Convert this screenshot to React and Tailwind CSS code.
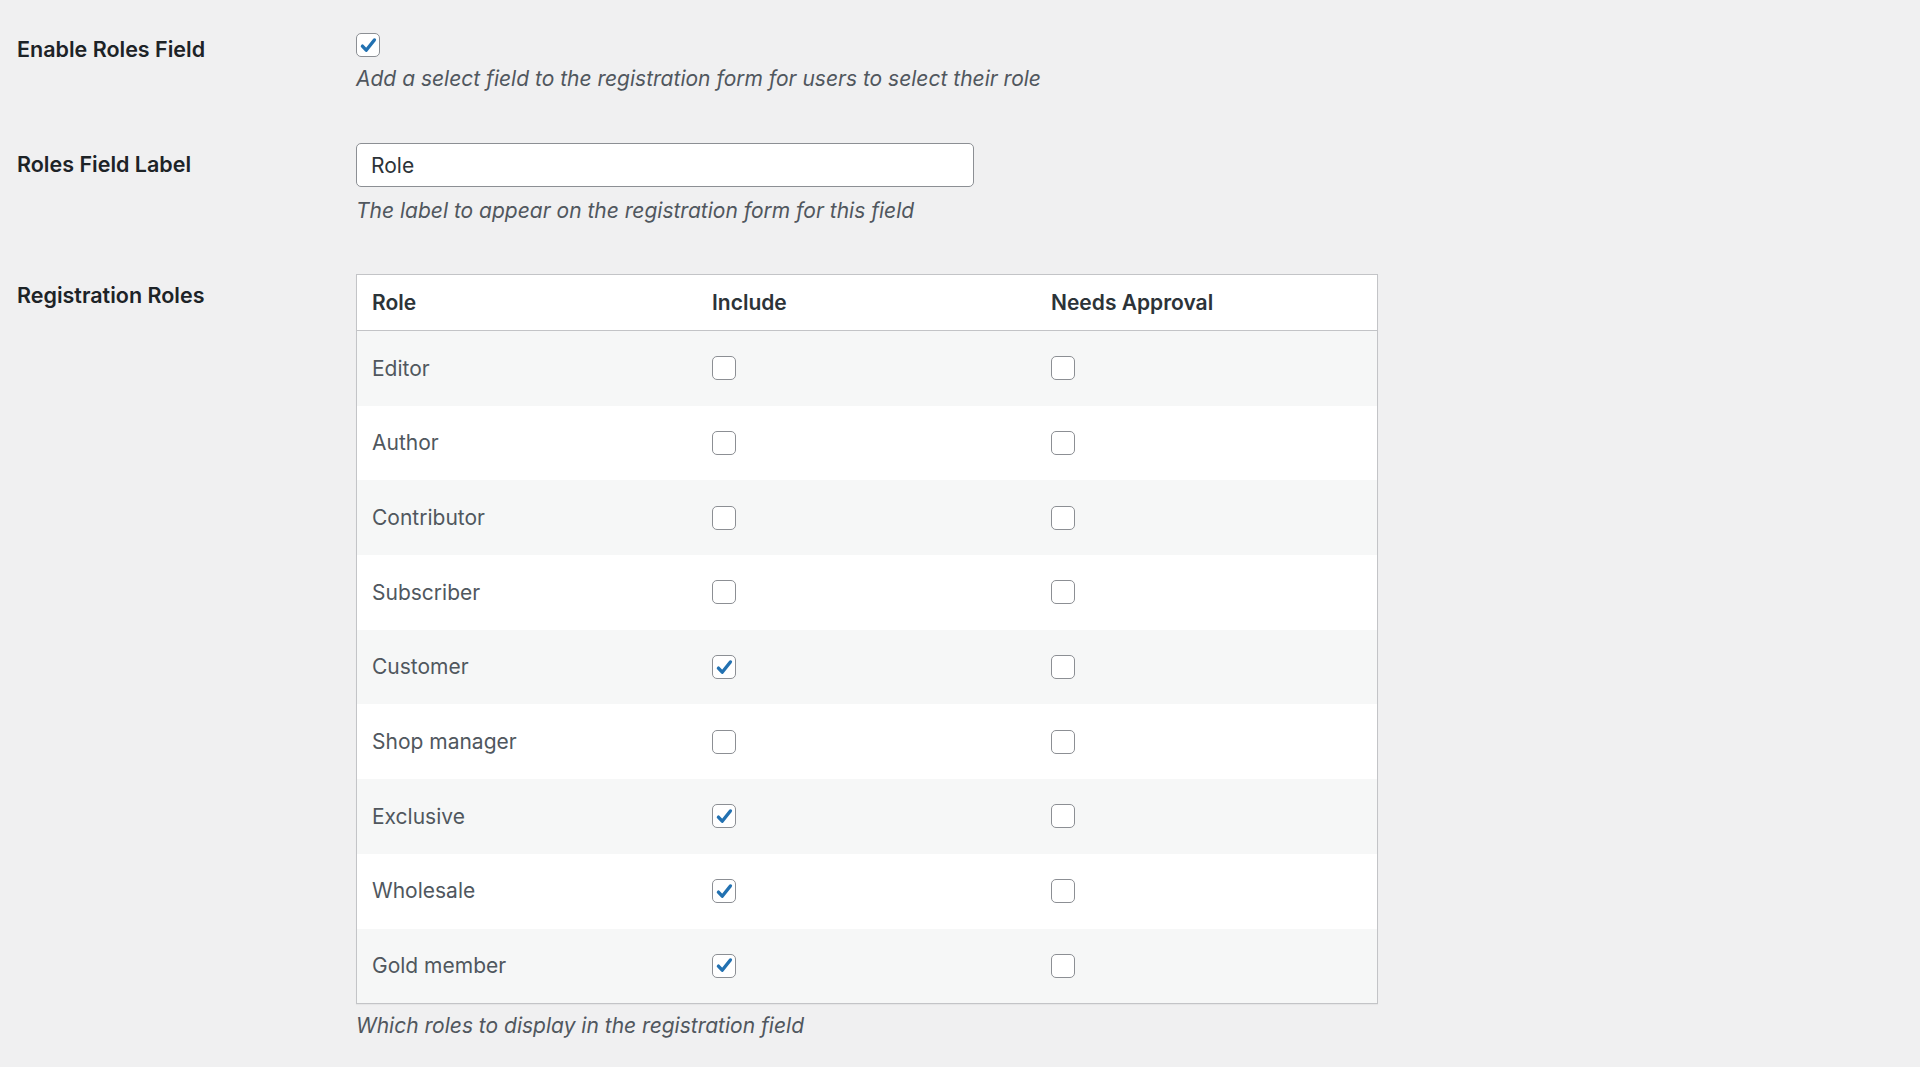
const ROLES = [
  { name: "Editor", include: false, approval: false },
  { name: "Author", include: false, approval: false },
  { name: "Contributor", include: false, approval: false },
  { name: "Subscriber", include: false, approval: false },
  { name: "Customer", include: true, approval: false },
  { name: "Shop manager", include: false, approval: false },
  { name: "Exclusive", include: true, approval: false },
  { name: "Wholesale", include: true, approval: false },
  { name: "Gold member", include: true, approval: false },
];

function Checkbox({ checked }) {
  return (
    <span className="flex h-[24px] w-[24px] items-center justify-center rounded-[5px] border-[1.5px] border-[#8c8f94] bg-white">
      {checked && (
        <svg viewBox="0 0 20 20" className="h-[21px] w-[21px]">
          <path d="M4.2 10.6l3.6 3.9 7.8-9.8" fill="none" stroke="#2271b1" strokeWidth="3.2" strokeLinecap="round" strokeLinejoin="round" />
        </svg>
      )}
    </span>
  );
}

export default function App() {
  return (
    <div className="min-h-[1067px] bg-[#f0f0f1] pl-[17px] text-[21px] text-[#1d2327]" style={{ fontFamily: "Inter, 'Noto Sans', sans-serif" }}>
      {/* Enable Roles Field */}
      <div className="flex pt-[33px]">
        <div className="w-[339px] pt-[2px] text-[21.5px] font-semibold leading-[28px]">Enable Roles Field</div>
        <div>
          <Checkbox checked />
          <p className="mt-[8px] italic leading-[28px] text-[#50575e]">Add a select field to the registration form for users to select their role</p>
        </div>
      </div>

      {/* Roles Field Label */}
      <div className="mt-[50px] flex">
        <div className="w-[339px] pt-[7px] text-[21.5px] font-semibold leading-[28px]">Roles Field Label</div>
        <div>
          <input
            type="text"
            defaultValue="Role"
            className="h-[44px] w-[618px] rounded-[5px] border-[1.5px] border-[#8c8f94] bg-white px-[14px] text-[#2c3338] outline-none"
          />
          <p className="mt-[10px] italic leading-[28px] text-[#50575e]">The label to appear on the registration form for this field</p>
        </div>
      </div>

      {/* Registration Roles */}
      <div className="mt-[49px] flex">
        <div className="w-[339px] pt-[7px] text-[21.5px] font-semibold leading-[28px]">Registration Roles</div>
        <div>
          <div className="w-[1022px] border-[1.5px] border-[#c3c4c7] bg-white shadow-[0_1px_1px_rgba(0,0,0,0.04)]">
            <div className="grid h-[56px] grid-cols-[340px_339px_1fr] items-center border-b-[1.5px] border-[#c3c4c7] pl-[15px] font-semibold text-[#2c3338]">
              <div>Role</div>
              <div>Include</div>
              <div>Needs Approval</div>
            </div>
            {ROLES.map((r, i) => (
              <div
                key={r.name}
                className={`grid h-[74.7px] grid-cols-[340px_339px_1fr] items-center pl-[15px] text-[#50575e] ${i % 2 === 0 ? "bg-[#f6f7f7]" : "bg-white"}`}
              >
                <div>{r.name}</div>
                <div><Checkbox checked={r.include} /></div>
                <div><Checkbox checked={r.approval} /></div>
              </div>
            ))}
          </div>
          <p className="mt-[8px] italic leading-[28px] text-[#50575e]">Which roles to display in the registration field</p>
        </div>
      </div>
    </div>
  );
}
